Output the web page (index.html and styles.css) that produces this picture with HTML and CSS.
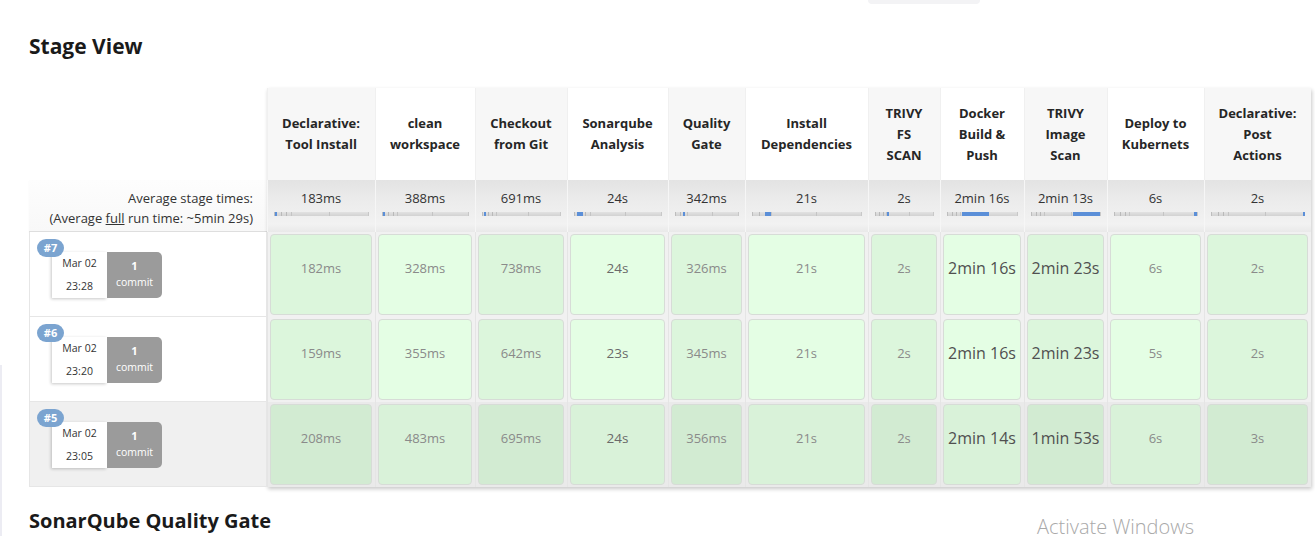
FILE: index.html
```html
<!DOCTYPE html>
<html>
<head>
<meta charset="utf-8">
<title>Stage View</title>
<link rel="stylesheet" href="styles.css">
</head>
<body>
<div class="topbar"></div>
<div class="edge"></div>
<main class="page">
  <h2 class="title">Stage View</h2>
  <section class="stage-view">
    <div class="left">
      <div class="left-head"></div>
      <div class="avg-label">
        <div>Average stage times:</div>
        <div>(Average <u>full</u> run time: ~5min 29s)</div>
      </div>
      <div class="build">
        <span class="badge">#7</span>
        <div class="info">
          <div class="date"><div>Mar 02</div><div>23:28</div></div>
          <div class="commit"><b>1</b><div>commit</div></div>
        </div>
      </div>
      <div class="build">
        <span class="badge">#6</span>
        <div class="info">
          <div class="date"><div>Mar 02</div><div>23:20</div></div>
          <div class="commit"><b>1</b><div>commit</div></div>
        </div>
      </div>
      <div class="build alt">
        <span class="badge">#5</span>
        <div class="info">
          <div class="date"><div>Mar 02</div><div>23:05</div></div>
          <div class="commit"><b>1</b><div>commit</div></div>
        </div>
      </div>
    </div>

    <div class="table">
      <!-- header row -->
      <div class="th odd">Declarative:<br>Tool Install</div>
      <div class="th">clean<br>workspace</div>
      <div class="th odd">Checkout<br>from Git</div>
      <div class="th">Sonarqube<br>Analysis</div>
      <div class="th odd">Quality<br>Gate</div>
      <div class="th">Install<br>Dependencies</div>
      <div class="th odd">TRIVY<br>FS<br>SCAN</div>
      <div class="th">Docker<br>Build &amp;<br>Push</div>
      <div class="th odd">TRIVY<br>Image<br>Scan</div>
      <div class="th">Deploy to<br>Kubernets</div>
      <div class="th odd">Declarative:<br>Post<br>Actions</div>

      <!-- average row -->
      <div class="avg">183ms<div class="bar"><span class="fill" style="left:0%;width:1%"></span></div></div>
      <div class="avg">388ms<div class="bar"><span class="fill" style="left:0%;width:1%"></span></div></div>
      <div class="avg">691ms<div class="bar"><span class="fill" style="left:1%;width:1%"></span></div></div>
      <div class="avg">24s<div class="bar"><span class="fill" style="left:2%;width:7%"></span></div></div>
      <div class="avg">342ms<div class="bar"><span class="fill" style="left:12%;width:1.5%"></span></div></div>
      <div class="avg">21s<div class="bar"><span class="fill" style="left:11%;width:5.5%"></span></div></div>
      <div class="avg">2s<div class="bar"><span class="fill" style="left:20%;width:1.5%"></span></div></div>
      <div class="avg">2min 16s<div class="bar"><span class="fill" style="left:20%;width:40%"></span></div></div>
      <div class="avg">2min 13s<div class="bar"><span class="fill" style="left:61%;width:39%"></span></div></div>
      <div class="avg">6s<div class="bar"><span class="fill" style="left:96.5%;width:3.5%"></span></div></div>
      <div class="avg">2s<div class="bar"><span class="fill" style="left:99%;width:1%"></span></div></div>

      <!-- build #7 -->
      <div class="td odd"><div class="box">182ms</div></div>
      <div class="td"><div class="box">328ms</div></div>
      <div class="td odd"><div class="box">738ms</div></div>
      <div class="td"><div class="box mid">24s</div></div>
      <div class="td odd"><div class="box">326ms</div></div>
      <div class="td"><div class="box">21s</div></div>
      <div class="td odd"><div class="box">2s</div></div>
      <div class="td"><div class="box long">2min 16s</div></div>
      <div class="td odd"><div class="box long">2min 23s</div></div>
      <div class="td"><div class="box">6s</div></div>
      <div class="td odd"><div class="box">2s</div></div>

      <!-- build #6 -->
      <div class="td odd"><div class="box">159ms</div></div>
      <div class="td"><div class="box">355ms</div></div>
      <div class="td odd"><div class="box">642ms</div></div>
      <div class="td"><div class="box mid">23s</div></div>
      <div class="td odd"><div class="box">345ms</div></div>
      <div class="td"><div class="box">21s</div></div>
      <div class="td odd"><div class="box">2s</div></div>
      <div class="td"><div class="box long">2min 16s</div></div>
      <div class="td odd"><div class="box long">2min 23s</div></div>
      <div class="td"><div class="box">5s</div></div>
      <div class="td odd"><div class="box">2s</div></div>

      <!-- build #5 -->
      <div class="td odd r3"><div class="box">208ms</div></div>
      <div class="td r3"><div class="box">483ms</div></div>
      <div class="td odd r3"><div class="box">695ms</div></div>
      <div class="td r3"><div class="box mid">24s</div></div>
      <div class="td odd r3"><div class="box">356ms</div></div>
      <div class="td r3"><div class="box">21s</div></div>
      <div class="td odd r3"><div class="box">2s</div></div>
      <div class="td r3"><div class="box long">2min 14s</div></div>
      <div class="td odd r3"><div class="box long">1min 53s</div></div>
      <div class="td r3"><div class="box">6s</div></div>
      <div class="td odd r3"><div class="box">3s</div></div>
    </div>
  </section>
  <h2 class="title sub">SonarQube Quality Gate</h2>
</main>
<div class="watermark">Activate Windows</div>
</body>
</html>
```

FILE: styles.css
```css
html, body {
  margin: 0;
  padding: 0;
}
body {
  font-family: "Open Sans", "Noto Sans", "DejaVu Sans", sans-serif;
  color: #333;
  background: #fff;
  position: relative;
  height: 536px;
  overflow: hidden;
}
.topbar {
  margin-left: 868px;
  width: 112px;
  height: 4px;
  background: #f3f3f5;
  border-radius: 0 0 7px 7px;
}
.edge {
  position: absolute;
  left: 0;
  top: 365px;
  bottom: 0;
  width: 2px;
  background: #ececf3;
}
.page {
  padding-left: 29px;
}
.title {
  margin: 28px 0 0 0;
  font-size: 21px;
  line-height: 28px;
  font-weight: 700;
  color: #1a1a1a;
}
.title.sub {
  margin-top: 20px;
  font-size: 20px;
}
.stage-view {
  display: flex;
  align-items: flex-start;
  margin-top: 28px;
}
.left {
  width: 238px;
  flex: none;
}
.left-head {
  height: 92px;
}
.avg-label {
  height: 52px;
  box-sizing: border-box;
  padding: 8px 14px 0 0;
  text-align: right;
  font-size: 13px;
  line-height: 20px;
  color: #333;
  background: linear-gradient(#fdfdfd, #f8f8f8);
  border-bottom: 1px solid #dedede;
  box-shadow: 0 1px 1px rgba(0, 0, 0, 0.06);
}
.build {
  position: relative;
  height: 85px;
  box-sizing: border-box;
  border: 1px solid #e6e6e6;
  border-top: none;
  padding: 20px 0 0 22px;
  background: #fff;
}
.build.alt {
  background: #f0f0f0;
}
.badge {
  position: absolute;
  left: 7px;
  top: 7px;
  z-index: 2;
  width: 27px;
  height: 18px;
  border-radius: 9px;
  background: #7ba4d0;
  color: #fff;
  font-size: 11px;
  font-weight: 700;
  line-height: 18px;
  text-align: center;
}
.info {
  display: flex;
  height: 46px;
}
.date {
  width: 55px;
  height: 46px;
  background: #fff;
  box-shadow: -1px 1px 3px rgba(0, 0, 0, 0.22);
  text-align: center;
  font-size: 10.5px;
  line-height: 23px;
  color: #333;
}
.commit {
  width: 55px;
  height: 46px;
  box-sizing: border-box;
  padding-top: 5px;
  background: #9b9b9b;
  border-radius: 0 5px 5px 0;
  color: #fff;
  text-align: center;
  font-size: 10.5px;
  line-height: 17px;
}
.commit b {
  display: block;
  font-size: 11px;
}
.table {
  display: grid;
  grid-template-columns: 108px 100px 92px 101px 77px 123px 72px 84px 83px 97px 107px;
  grid-template-rows: 92px 52px 85px 85px 85px;
  box-shadow: 1px 2px 4px rgba(0, 0, 0, 0.22);
  flex: none;
}
.th {
  display: flex;
  align-items: center;
  justify-content: center;
  text-align: center;
  font-size: 13px;
  font-weight: 700;
  line-height: 21px;
  color: #262626;
  background: #fff;
  box-shadow: inset 1px 0 0 #f0f0f0;
}
.th.odd {
  background: #f7f7f7;
}
.avg {
  box-sizing: border-box;
  padding-top: 8px;
  text-align: center;
  font-size: 13px;
  line-height: 20px;
  color: #333;
  background: linear-gradient(#e3e3e3 0%, #ebebeb 35%, #f2f2f2 85%, #e9e9e9 100%);
  box-shadow: inset 1px 0 0 #f6f6f6;
}
.bar {
  position: relative;
  height: 4px;
  margin: 4px 6px 0 7px;
  background:
    linear-gradient(to right,
      transparent 6%, #b9b9b9 6%, #b9b9b9 calc(6% + 1px), transparent calc(6% + 1px),
      transparent 12%, #b9b9b9 12%, #b9b9b9 calc(12% + 1px), transparent calc(12% + 1px),
      transparent 17%, #c4c4c4 17%, #c4c4c4 calc(17% + 1px), transparent calc(17% + 1px),
      transparent 58%, #c4c4c4 58%, #c4c4c4 calc(58% + 1px), transparent calc(58% + 1px)),
    linear-gradient(#e2e2e2, #d2d2d2);
  border-left: 1px solid #bdbdbd;
  border-right: 1px solid #c8c8c8;
}
.fill {
  position: absolute;
  top: 0;
  bottom: 0;
  min-width: 2px;
  background: #5b8fd8;
}
.td {
  box-sizing: border-box;
  padding: 2px 3px;
  background: #f1f1f1;
  box-shadow: inset 1px 0 0 #e5e5e5;
}
.td.r3 {
  background: #eaeaea;
}
.box {
  height: 100%;
  box-sizing: border-box;
  padding-top: 23px;
  border: 1px solid #d7dcd7;
  border-radius: 4px;
  background: #e4fee4;
  text-align: center;
  font-size: 13px;
  line-height: 20px;
  color: #8a8a8a;
}
.td.odd .box {
  background: #dcf6dc;
}
.td.r3 .box {
  background: #d9f2d9;
}
.td.odd.r3 .box {
  background: #d2ebd2;
}
.box.mid {
  color: #6a6a6a;
  font-size: 13.5px;
}
.box.long {
  color: #505050;
  font-size: 16px;
}
.watermark {
  position: absolute;
  left: 1037px;
  top: 517px;
  font-size: 20px;
  font-weight: 300;
  line-height: 19px;
  color: #a9a9a9;
}
```
